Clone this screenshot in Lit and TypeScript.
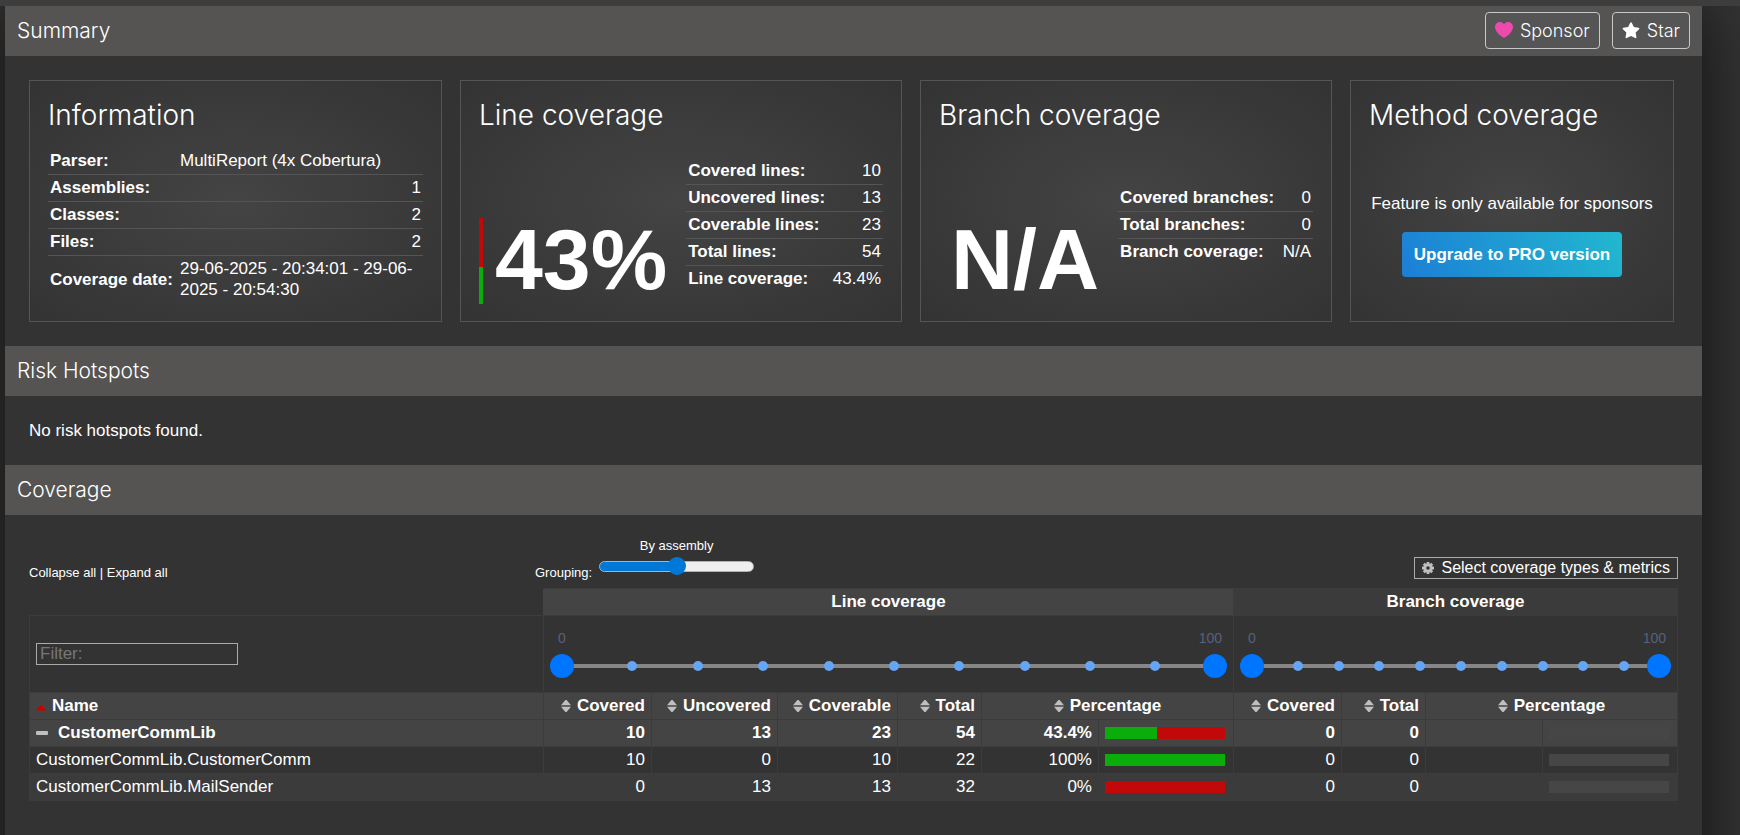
import { LitElement, html, css } from "lit";
import { customElement } from "lit/decorators.js";

const sortIcon = html`<svg class="icon" viewBox="0 0 10 12" width="10" height="12" aria-hidden="true"><path d="M0 5.3 4.4 0h1.2L10 5.3zM0 6.7h10L5.6 12H4.4z" fill="#bfbfbf"/></svg>`;
const ascIcon = html`<svg class="icon" viewBox="0 0 10 12" width="10" height="12" aria-hidden="true"><path d="M0.5 9.5 4.4 5h1.2L9.5 9.5v1h-9z" fill="#c00"/></svg>`;
const minusIcon = html`<svg class="icon minus" viewBox="0 0 12 12" width="12" height="12" aria-hidden="true"><rect y="4" width="12" height="4" rx="1" fill="#bfbfbf"/></svg>`;
const heartIcon = html`<svg viewBox="0 0 16 16" aria-hidden="true"><path fill="#ec4aac" d="M7.655 13.916v-.001h-.002l-.006-.003-.018-.01a22 22 0 0 1-3.744-2.584C2.045 9.731 0 7.35 0 4.5 0 1.836 2.086 0 4.25 0 5.797 0 7.153.802 8 2.02 8.847.802 10.203 0 11.75 0 13.914 0 16 1.836 16 4.5c0 2.85-2.044 5.231-3.886 6.818a22 22 0 0 1-3.744 2.584l-.018.01-.006.003h-.002a.75.75 0 0 1-.689.001z"/></svg>`;
const starIcon = html`<svg viewBox="0 0 16 16" aria-hidden="true"><path fill="#fff" d="M8 .25a.75.75 0 0 1 .673.418l1.882 3.815 4.21.612a.75.75 0 0 1 .416 1.279l-3.046 2.97.719 4.192a.75.75 0 0 1-1.088.791L8 12.347l-3.766 1.98a.75.75 0 0 1-1.088-.79l.72-4.194L.818 6.374a.75.75 0 0 1 .416-1.28l4.21-.611L7.327.668A.75.75 0 0 1 8 .25z"/></svg>`;
const gearIcon = html`<svg viewBox="0 0 12 12" width="12" height="12" aria-hidden="true"><g fill="none" stroke="#bfbfbf"><circle cx="6" cy="6" r="3.2" stroke-width="2.8"/><path stroke-width="2.8" d="M6 0v2.2M6 9.8V12M0 6h2.2M9.8 6H12M1.8 1.8l1.5 1.5M8.7 8.7l1.5 1.5M10.2 1.8 8.7 3.3M3.3 8.7l-1.5 1.5"/></g></svg>`;

interface Row {
  name: string;
  line: string[];
  pct: string;
  value: number;
  total?: boolean;
}

const rows: Row[] = [
  { name: "CustomerCommLib", line: ["10", "13", "23", "54"], pct: "43.4%", value: 43.4, total: true },
  { name: "CustomerCommLib.CustomerComm", line: ["10", "0", "10", "22"], pct: "100%", value: 100 },
  { name: "CustomerCommLib.MailSender", line: ["0", "13", "13", "32"], pct: "0%", value: 0 },
];

const lineFacts = [
  ["Covered lines:", "10"],
  ["Uncovered lines:", "13"],
  ["Coverable lines:", "23"],
  ["Total lines:", "54"],
  ["Line coverage:", "43.4%"],
];

const branchFacts = [
  ["Covered branches:", "0"],
  ["Total branches:", "0"],
  ["Branch coverage:", "N/A"],
];

@customElement("range-slider")
class RangeSlider extends LitElement {
  static properties = { label: { type: String } };
  declare label: string;
  static styles = css`
    :host { display: block; padding: 14px 0; font: 14px/17px "Liberation Sans", Arial, sans-serif; color: #57617c; }
    .labels { display: flex; justify-content: space-between; padding: 0 5px 0 8px; }
    .track { display: grid; align-items: center; height: 24px; margin-top: 7px; }
    .track > * { grid-area: 1 / 1; }
    .line { height: 4px; background: #868686; margin: 0 12px; }
    .dots { display: flex; justify-content: space-between; padding: 0 1px 0 12px; }
    .dot { width: 10px; height: 10px; border-radius: 50%; background: #64a5f5; }
    input { appearance: none; width: 100%; height: 24px; margin: 0; background: none; pointer-events: none; }
    input::-webkit-slider-thumb {
      appearance: none; width: 24px; height: 24px; border-radius: 50%; background: #0075ff; pointer-events: auto;
    }
  `;
  render() {
    return html`
      <div class="labels"><span>0</span><span>100</span></div>
      <div class="track">
        <div class="line"></div>
        <div class="dots">${Array.from({ length: 11 }, () => html`<span class="dot"></span>`)}</div>
        <input type="range" min="0" max="100" step="10" value="0" aria-label="${this.label} minimum">
        <input type="range" min="0" max="100" step="10" value="100" aria-label="${this.label} maximum">
      </div>`;
  }
}

@customElement("app-root")
class AppRoot extends LitElement {
  static styles = css`
    :host {
      display: block; min-height: 100vh; overflow: hidden;
      background: #333; color: #fff; font: 17px/21px "Liberation Sans", Arial, sans-serif;
    }
    * { box-sizing: border-box; }
    a { color: inherit; text-decoration: none; }
    .strip { position: relative; z-index: 1; height: 6px; background: #3d3d3d; }
    .container {
      min-height: calc(100vh + 80px); margin: 0 38px -80px 5px; padding-bottom: 80px;
      background: #333; box-shadow: 0 0 60px #111;
    }
    .bar { display: flex; align-items: center; gap: 12px; height: 50px; padding: 0 12px; background: #555452; }
    h1 { margin: 0; font: 300 21px/26px "Century Gothic", Inter, sans-serif; }
    .links { display: flex; align-self: flex-start; gap: 12px; margin: 6px 0 0 auto; }
    .gh {
      display: flex; align-items: center; gap: 7px; height: 37px; padding: 0 9px;
      border: 1px solid #c8c8c8; border-radius: 4px; background: #555;
      font: 300 18px/24px "Century Gothic", Inter, sans-serif;
    }
    .gh svg { width: 18px; height: 18px; }

    .cards { display: grid; grid-template-columns: 413fr 442fr 412fr 324fr; gap: 18px; padding: 24px 28px 24px 24px; }
    .card {
      display: flex; flex-direction: column; min-height: 242px; padding: 18px 18px 17px; border: 1px solid #555;
      background: radial-gradient(#444, #333);
    }
    h2 { margin: 0; font: 300 28px/32px "Century Gothic", Inter, sans-serif; }
    table { border-collapse: collapse; }
    .facts th { padding: 2px 2px 3px; text-align: left; white-space: nowrap; }
    .facts td { padding: 2px 2px 3px; text-align: right; }
    .facts tr + tr { border-top: 1px solid #555; }
    .facts td.text { text-align: left; }
    .info { width: 100%; margin-top: 17px; }
    .info th { width: 130px; }
    .split { display: flex; flex: 1; align-items: center; margin-top: 14px; }
    .meter { width: 4px; height: 86px; align-self: flex-end; background: linear-gradient(#c10909 57%, #0aad0a 57%); }
    .big { align-self: flex-end; padding: 0 0 2px 12px; font-size: 86px; line-height: 86px; font-weight: bold; }
    .split .facts { flex: 1; margin-left: 19px; }
    .split .facts table { width: 100%; }
    .pro {
      display: flex; flex: 1; flex-direction: column; align-items: center; justify-content: center; gap: 18px;
      padding-top: 34px; white-space: nowrap;
    }
    .probtn { padding: 12px; border-radius: 4px; font-weight: bold; background: linear-gradient(60deg, #1c7ed6, #22b8cf); }
    .text-block { margin: 0; padding: 24px; }

    .coverage { padding: 22px 24px 24px; }
    .tools {
      display: grid; grid-template-columns: 506fr 506fr 637fr; align-items: end; margin-bottom: 6px;
      font-size: 13px; line-height: 18px;
    }
    .grouping { display: flex; align-items: flex-end; gap: 7px; }
    .slide { display: flex; flex-direction: column; align-items: center; gap: 2px; padding-bottom: 7px; }
    .slide input {
      appearance: none; width: 155px; height: 18px; margin: 0; background: none;
    }
    .slide input::-webkit-slider-runnable-track {
      height: 11px; border: 1px solid #b2b2b2; border-radius: 6px;
      background: linear-gradient(90deg, #0078d7 50%, #efefef 50%);
    }
    .slide input::-webkit-slider-thumb {
      appearance: none; width: 18px; height: 18px; margin-top: -5px; border-radius: 50%; background: #0078d7;
    }
    .select {
      display: flex; align-items: center; gap: 7px; height: 22px; margin: 0 0 3px; padding: 0 7px; justify-self: end;
      border: 1px solid #aaa; background: #333; color: #fff; font: 16px/20px "Liberation Sans", Arial, sans-serif;
    }

    .overview { width: 100%; table-layout: fixed; }
    .overview th, .overview td { padding: 2px 6px 3px; border: 1px solid #3c3c3c; text-align: right; white-space: nowrap; }
    .overview .left { text-align: left; }
    .overview .center { text-align: center; }
    .overview .none { border-color: transparent transparent #3c3c3c; }
    .overview .alt { background: #3b3b3b; }
    .overview .shade { background: #444; }
    .overview .slider { padding: 0 6px; }
    .c-108 { width: 108px; } .c-126 { width: 126px; } .c-120 { width: 120px; }
    .c-84 { width: 84px; } .c-117 { width: 117px; } .c-135 { width: 135px; }
    .overview a { display: inline-flex; align-items: center; gap: 6px; vertical-align: top; }
    .overview a.group { gap: 10px; }
    .icon { flex: none; }
    .filter {
      display: block; width: 202px; height: 22px; padding: 0 3px; border: 1px solid #aaa; border-radius: 0;
      background: #333; color: #fff; font: 17px/20px "Liberation Sans", Arial, sans-serif;
    }
    .filter::placeholder { color: #777; }
    .pctbar { display: flex; width: 120px; height: 12px; background: #c10909; }
    .pctbar.empty { background: #464646; }
    .fill { background: #0aad0a; }
  `;

  facts(items: string[][]) {
    return html`<div class="facts"><table>
      ${items.map(([k, v]) => html`<tr><th scope="row">${k}</th><td>${v}</td></tr>`)}
    </table></div>`;
  }

  sortable(label: string) {
    return html`<a href="#">${sortIcon}${label}</a>`;
  }

  row(r: Row, i: number) {
    const shade = r.total ? "shade" : i === 2 ? "alt" : "";
    const cell = (v: string) => (r.total ? html`<th>${v}</th>` : html`<td>${v}</td>`);
    return html`<tr class=${shade}>
      ${r.total
        ? html`<th class="left" scope="row"><a class="group" href="#">${minusIcon}${r.name}</a></th>`
        : html`<td class="left"><a href="#">${r.name}</a></td>`}
      ${r.line.map(cell)}${cell(r.pct)}
      <td><div class="pctbar"><div class="fill" style="width:${r.value}%"></div></div></td>
      ${cell("0")}${cell("0")}<td></td>
      <td><div class="pctbar empty"></div></td>
    </tr>`;
  }

  render() {
    return html`
      <div class="strip"></div>
      <div class="container">
        <header class="bar">
          <h1>Summary</h1>
          <div class="links">
            <a class="gh" href="#">${heartIcon}Sponsor</a>
            <a class="gh" href="#">${starIcon}Star</a>
          </div>
        </header>
        <div class="cards">
          <section class="card">
            <h2>Information</h2>
            <table class="facts info">
              <tr><th scope="row">Parser:</th><td class="text">MultiReport (4x Cobertura)</td></tr>
              <tr><th scope="row">Assemblies:</th><td>1</td></tr>
              <tr><th scope="row">Classes:</th><td>2</td></tr>
              <tr><th scope="row">Files:</th><td>2</td></tr>
              <tr><th scope="row">Coverage date:</th><td class="text">29-06-2025 - 20:34:01 - 29-06-2025 - 20:54:30</td></tr>
            </table>
          </section>
          <section class="card">
            <h2>Line coverage</h2>
            <div class="split"><div class="meter"></div><div class="big">43%</div>${this.facts(lineFacts)}</div>
          </section>
          <section class="card">
            <h2>Branch coverage</h2>
            <div class="split"><div class="big">N/A</div>${this.facts(branchFacts)}</div>
          </section>
          <section class="card">
            <h2>Method coverage</h2>
            <div class="pro">
              <span>Feature is only available for sponsors</span>
              <a class="probtn" href="#">Upgrade to PRO version</a>
            </div>
          </section>
        </div>
        <header class="bar"><h1>Risk Hotspots</h1></header>
        <p class="text-block">No risk hotspots found.</p>
        <header class="bar"><h1>Coverage</h1></header>
        <div class="coverage">
          <div class="tools">
            <div><a href="#">Collapse all</a> | <a href="#">Expand all</a></div>
            <div class="grouping">
              <label for="grouping">Grouping:</label>
              <div class="slide">
                <span>By assembly</span>
                <input id="grouping" type="range" min="-1" max="1" value="0">
              </div>
            </div>
            <button class="select" type="button">${gearIcon}Select coverage types &amp; metrics</button>
          </div>
          <table class="overview">
            <colgroup>
              <col>
              <col class="c-108"><col class="c-126"><col class="c-120"><col class="c-84"><col class="c-117"><col class="c-135">
              <col class="c-108"><col class="c-84"><col class="c-117"><col class="c-135">
            </colgroup>
            <thead>
              <tr>
                <td class="none"></td>
                <th class="center shade" colspan="6">Line coverage</th>
                <th class="center alt" colspan="4">Branch coverage</th>
              </tr>
              <tr>
                <td class="left"><input class="filter" type="text" placeholder="Filter:" aria-label="Filter"></td>
                <td class="slider" colspan="6"><range-slider label="Line coverage"></range-slider></td>
                <td class="slider" colspan="4"><range-slider label="Branch coverage"></range-slider></td>
              </tr>
              <tr class="shade">
                <th class="left"><a href="#">${ascIcon}Name</a></th>
                <th>${this.sortable("Covered")}</th>
                <th>${this.sortable("Uncovered")}</th>
                <th>${this.sortable("Coverable")}</th>
                <th>${this.sortable("Total")}</th>
                <th class="center" colspan="2">${this.sortable("Percentage")}</th>
                <th>${this.sortable("Covered")}</th>
                <th>${this.sortable("Total")}</th>
                <th class="center" colspan="2">${this.sortable("Percentage")}</th>
              </tr>
            </thead>
            <tbody>${rows.map((r, i) => this.row(r, i))}</tbody>
          </table>
        </div>
      </div>`;
  }
}
